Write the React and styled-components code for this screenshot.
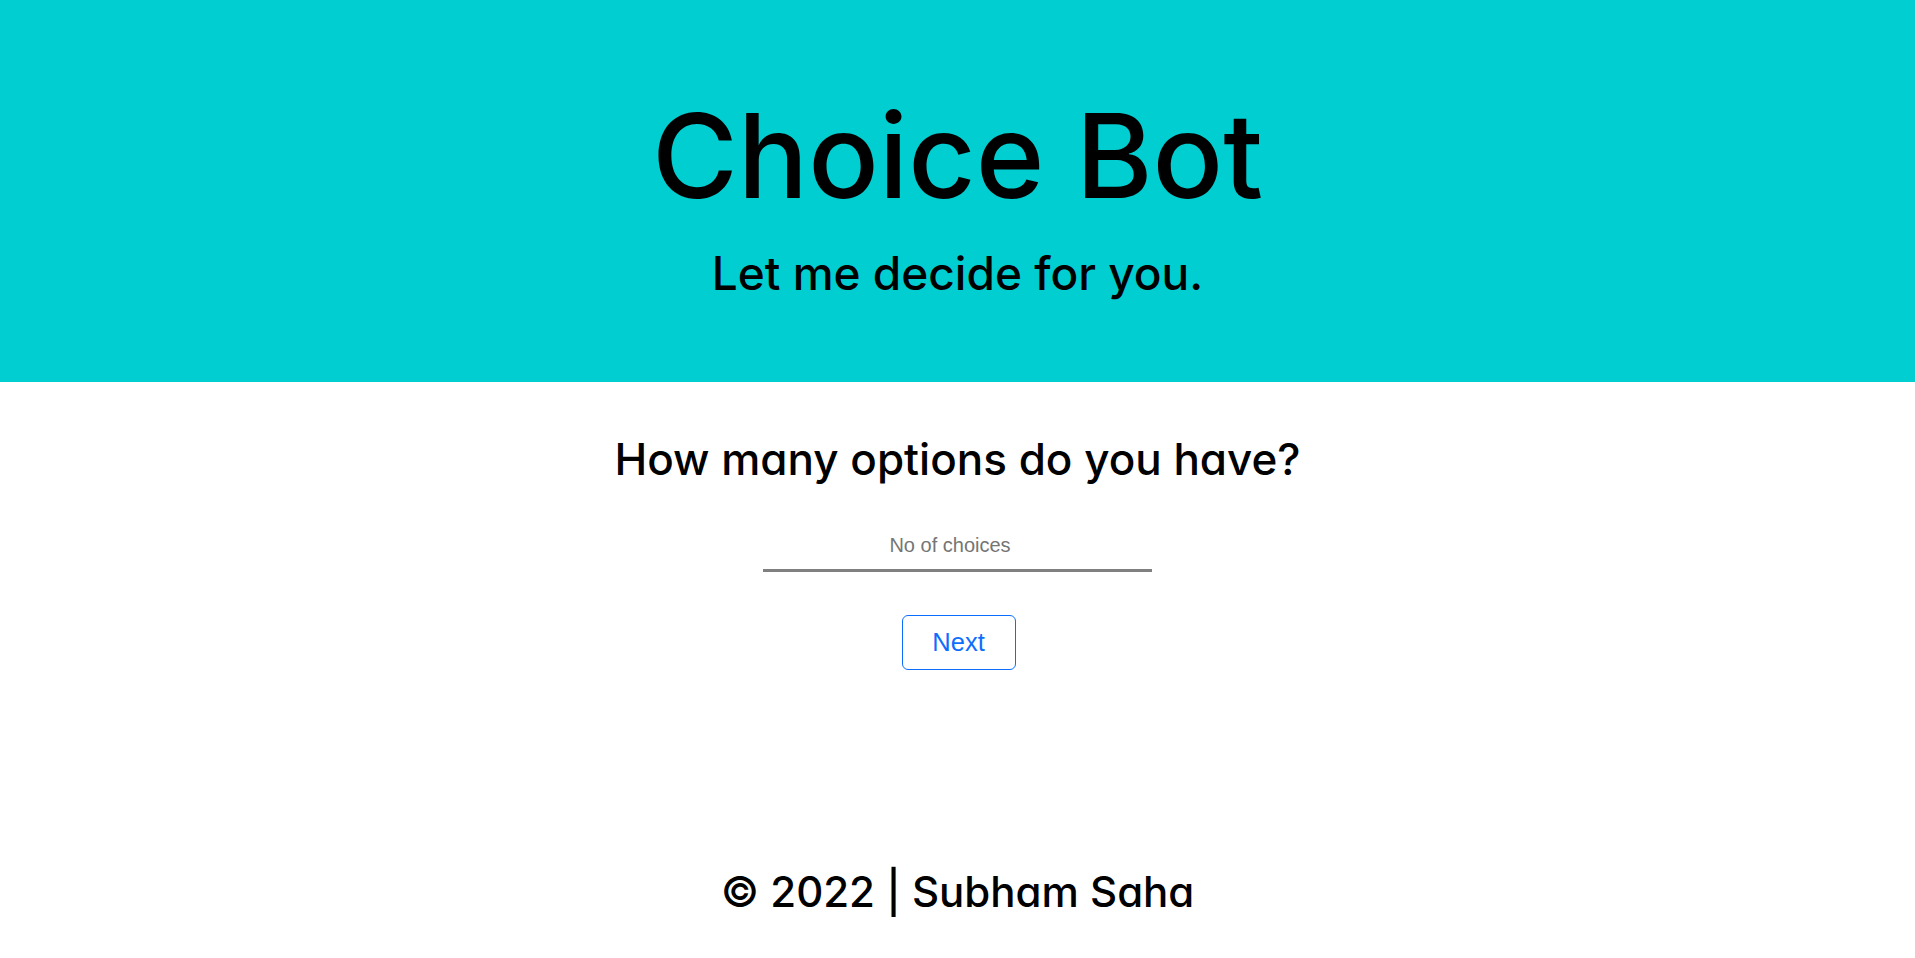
import React from "react";
import styled, { createGlobalStyle } from "styled-components";

const GlobalStyle = createGlobalStyle`
  html, body { margin: 0; padding: 0; background: #ffffff; }
  body { font-family: "Liberation Sans", Arial, sans-serif; }
  * { box-sizing: border-box; }
`;

const Page = styled.div`
  min-height: 100vh;
  display: flex;
  flex-direction: column;
  text-align: center;
`;

const Header = styled.header`
  height: 382px;
  background: #00ced1;
  display: flex;
  flex-direction: column;
  align-items: center;
  padding-top: 86px;
`;

const Heading = styled.h1`
  margin: ${(p) => p.$top || 0}px 0 0;
  font-family: Inter, "Noto Sans", sans-serif;
  font-feature-settings: "cv11" 1;
  font-weight: 500;
  font-size: ${(p) => p.$size}px;
  line-height: 1.2;
  color: #000;
`;

const Main = styled.main`
  flex: 1;
  display: flex;
  flex-direction: column;
  align-items: center;
  padding-top: 51px;
`;

const Field = styled.input`
  margin-top: 36px;
  width: 389px;
  height: 50px;
  padding: 0;
  border: none;
  border-bottom: 3px solid #808080;
  outline: none;
  background: transparent;
  font-family: "Liberation Sans", Arial, sans-serif;
  font-size: 20px;
  text-align: center;
  color: #212529;
  &::placeholder { color: #757575; }
`;

const Button = styled.button`
  margin-top: 43px;
  margin-left: 2px;
  width: 114px;
  height: 55px;
  border: 1px solid #0d6efd;
  border-radius: 6px;
  background: #fff;
  color: #0d6efd;
  font-family: "Liberation Sans", Arial, sans-serif;
  font-size: 25.5px;
  cursor: pointer;
`;

const Footer = styled.footer`
  padding-bottom: 41px;
  display: flex;
  justify-content: center;
`;

export default function App() {
  return (
    <>
      <GlobalStyle />
      <Page>
        <Header>
          <Heading as="h1" $size={117}>Choice Bot</Heading>
          <Heading as="h2" $size={46} $top={20}>Let me decide for you.</Heading>
        </Header>
        <Main>
          <Heading as="h3" $size={44}>How many options do you have?</Heading>
          <Field type="number" placeholder="No of choices" />
          <Button type="button">Next</Button>
        </Main>
        <Footer>
          <Heading as="h3" $size={42}>© 2022 | Subham Saha</Heading>
        </Footer>
      </Page>
    </>
  );
}
